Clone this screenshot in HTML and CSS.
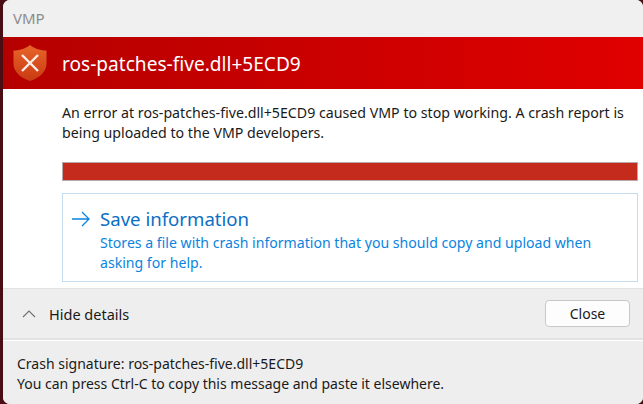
FILE: index.html
```html
<!DOCTYPE html>
<html lang="en">
<head>
    <meta charset="UTF-8">
    <title>VMP</title>
    <link rel="stylesheet" href="styles.css">
</head>
<body>
    <div class="dialog">
        <div class="titlebar">VMP</div>

        <div class="banner">
            <svg class="shield" width="36" height="38" viewBox="0 0 36 38">
                <defs>
                    <linearGradient id="shieldFill" x1="0" y1="0" x2="0" y2="1">
                        <stop offset="0" stop-color="#e8662a"/>
                        <stop offset="1" stop-color="#c93a12"/>
                    </linearGradient>
                </defs>
                <path d="M18 1 C13 5 7 6.5 1.5 6.5 V20 C1.5 28 9 34 18 37 C27 34 34.500 28 34.500 20 V6.500 C29 6.500 23 5 18 1 Z" fill="url(#shieldFill)"/>
                <path d="M10 11 L26 27 M26 11 L10 27" stroke="#fbeee6" stroke-width="2.400" fill="none"/>
            </svg>
            <h1>ros-patches-five.dll+5ECD9</h1>
        </div>

        <div class="main">
            <p class="message">An error at ros-patches-five.dll+5ECD9 caused VMP to stop working. A crash report is being uploaded to the VMP developers.</p>
            <div class="progress"></div>
            <div class="action">
                <svg class="arrow" width="20" height="16" viewBox="0 0 20 16">
                    <path d="M1 8 H18 M11 1 L18 8 L11 15" stroke="#0a84e0" stroke-width="1.300" fill="none"/>
                </svg>
                <div class="action-text">
                    <div class="action-title">Save information</div>
                    <div class="action-desc">Stores a file with crash information that you should copy and upload when asking for help.</div>
                </div>
            </div>
        </div>

        <div class="footer">
            <div class="toggle">
                <svg class="chevron" width="14" height="8" viewBox="0 0 14 8">
                    <path d="M1 7 L7 1 L13 7" stroke="#707070" stroke-width="1.100" fill="none"/>
                </svg>
                <span>Hide details</span>
            </div>
            <button class="btn">Close</button>
        </div>

        <div class="details">
            <div>Crash signature: ros-patches-five.dll+5ECD9</div>
            <div>You can press Ctrl-C to copy this message and paste it elsewhere.</div>
        </div>
    </div>
</body>
</html>
```

FILE: styles.css
```css
* {
    margin: 0;
    padding: 0;
    box-sizing: border-box;
}

html, body {
    height: 404px;
    overflow: hidden;
}

body {
    font-family: "Noto Sans", "Open Sans", sans-serif;
    font-size: 14px;
    background: #4a0d14;
    padding-left: 3px;
}

.dialog {
    height: 404px;
    background: white;
    border-radius: 7px;
    overflow: hidden;
    display: flex;
    flex-direction: column;
}

.titlebar {
    height: 37px;
    background: #f0f0f0;
    color: #8c8c8c;
    font-size: 15px;
    line-height: 36px;
    padding-left: 10px;
}

.banner {
    height: 52px;
    background: linear-gradient(90deg, #b50000 0%, #e00000 100%);
    display: flex;
    align-items: center;
    padding-left: 9px;
}

.shield {
    margin-right: 14px;
}

.banner h1 {
    font-size: 19.100px;
    font-weight: 400;
    color: white;
    padding-top: 2px;
}

.main {
    height: 199px;
    padding: 14px 5px 0 59px;
}

.message {
    color: #1a1a1a;
    line-height: 20px;
    font-size: 14.200px;
    padding-right: 6px;
}

.progress {
    height: 19px;
    margin-top: 19px;
    background: #c42b1c;
    border: 1px solid #b8aaa8;
}

.action {
    margin-top: 12px;
    height: 89px;
    border: 1px solid #c5dcee;
    display: flex;
    padding: 14px 8px 0 8px;
}

.arrow {
    margin: 3px 9px 0 0;
    flex-shrink: 0;
}

.action-title {
    font-size: 18.600px;
    line-height: 22px;
    color: #0a6fc4;
}

.action-desc {
    margin-top: 3px;
    color: #0a84e0;
    font-size: 14.100px;
    line-height: 20px;
}

.footer {
    height: 52px;
    background: #eeeeee;
    border-top: 1px solid #e2e2e2;
    border-bottom: 2px solid #e2e2e2;
    display: flex;
    align-items: center;
    justify-content: space-between;
    padding: 0 13px 0 19px;
}

.toggle {
    display: flex;
    align-items: center;
    color: #1a1a1a;
    font-size: 14.500px;
}

.chevron {
    margin-right: 13px;
}

.btn {
    width: 85px;
    height: 27px;
    background: #fdfdfd;
    border: 1px solid #c8c8c8;
    border-radius: 4px;
    font-family: inherit;
    font-size: 14px;
    color: #1a1a1a;
}

.details {
    flex: 1;
    background: #eeeeee;
    border-top: 1px solid white;
    padding: 13px 14px 0 14px;
    color: #1a1a1a;
    font-size: 14px;
    line-height: 20px;
}
```
